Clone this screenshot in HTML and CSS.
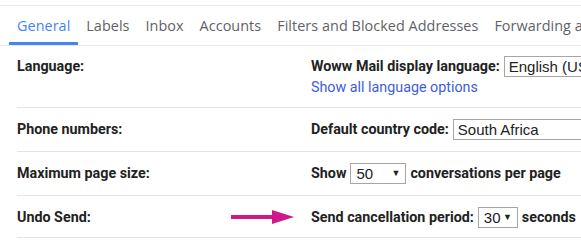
FILE: index.html
```html
<!DOCTYPE html>
<html lang="en">
<head>
  <meta charset="UTF-8" />
  <title>Settings - Woww Mail</title>
  <link rel="stylesheet" href="styles.css">
</head>
<body>
  <nav class="tabs">
    <a href="#" class="tab active">General</a>
    <a href="#" class="tab">Labels</a>
    <a href="#" class="tab">Inbox</a>
    <a href="#" class="tab">Accounts</a>
    <a href="#" class="tab">Filters and Blocked Addresses</a>
    <a href="#" class="tab">Forwarding and POP/IMAP</a>
  </nav>

  <div class="settings">
    <div class="row row-lang">
      <div class="label">Language:</div>
      <div class="value">
        <div class="line">
          <b>Woww Mail display language:</b>
          <span class="select select-wide">English (US)</span>
        </div>
        <a href="#" class="link">Show all language options</a>
      </div>
    </div>

    <div class="row">
      <div class="label">Phone numbers:</div>
      <div class="value">
        <div class="line">
          <b>Default country code:</b>
          <span class="select select-wide">South Africa</span>
        </div>
      </div>
    </div>

    <div class="row">
      <div class="label">Maximum page size:</div>
      <div class="value">
        <div class="line">
          <b>Show</b>
          <span class="select select-50">50<span class="arrow">▼</span></span>
          <b>conversations per page</b>
        </div>
      </div>
    </div>

    <div class="row row-last">
      <div class="label">Undo Send:</div>
      <div class="value">
        <svg class="pointer" width="64" height="16" viewBox="0 0 64 16">
          <rect x="0" y="6" width="44" height="4" fill="#d1178c"/>
          <polygon points="41,1 63,8 41,15" fill="#d1178c"/>
        </svg>
        <div class="line">
          <b>Send cancellation period:</b>
          <span class="select select-30">30<span class="arrow">▼</span></span>
          <b>seconds</b>
        </div>
      </div>
    </div>
  </div>
</body>
</html>
```

FILE: styles.css
```css
body {
  margin: 0;
  padding: 0;
  font-family: Roboto, 'Liberation Sans', sans-serif;
  color: #222;
  background-color: #fff;
  overflow: hidden;
  width: 581px;
}

.tabs {
  display: flex;
  margin-top: 5px;
  padding-left: 9px;
  border-top: 1px solid #e8e8e8;
  border-bottom: 1px solid #e8e8e8;
  white-space: nowrap;
}

.tab {
  display: block;
  padding: 11px 8px 8px;
  font-family: 'Open Sans', Roboto, sans-serif;
  font-size: 14.4px;
  line-height: 17px;
  color: #5f6368;
  text-decoration: none;
  border-bottom: 3px solid transparent;
  letter-spacing: 0.05px;
}

.tab.active {
  color: #4285f4;
  border-bottom-color: #4285f4;
}

.settings {
  padding-left: 17px;
}

.row {
  display: flex;
  border-bottom: 1px solid #e5e5e5;
  padding: 11px 0;
  min-height: 21px;
}

.row-lang {
  padding-top: 10px;
  padding-bottom: 10px;
}

.row-last {
  padding-bottom: 9px;
}

.label {
  width: 294px;
  flex-shrink: 0;
  font-weight: bold;
  font-size: 14.3px;
  line-height: 21px;
  color: #222;
}

.value {
  position: relative;
  font-size: 14.3px;
  line-height: 21px;
  white-space: nowrap;
}

.line {
  display: flex;
  align-items: center;
  gap: 4px;
}

.line b {
  font-weight: bold;
}

.select {
  display: inline-flex;
  align-items: center;
  box-sizing: border-box;
  height: 21px;
  padding: 0 5px;
  border: 1px solid #a6a6a6;
  font-family: 'Liberation Sans', Arial, sans-serif;
  font-size: 15px;
  color: #222;
  background: #fff;
}

.select-wide {
  width: 140px;
  padding-left: 4px;
}

.select-50 {
  width: 56px;
  justify-content: space-between;
}

.select-30 {
  width: 40px;
  justify-content: space-between;
}

.arrow {
  font-size: 9px;
  color: #222;
}

.link {
  display: block;
  margin-top: 1px;
  color: #3d5ddd;
  text-decoration: none;
  font-size: 14.3px;
  line-height: 19px;
}

.pointer {
  position: absolute;
  left: -80px;
  top: 2px;
}
```
